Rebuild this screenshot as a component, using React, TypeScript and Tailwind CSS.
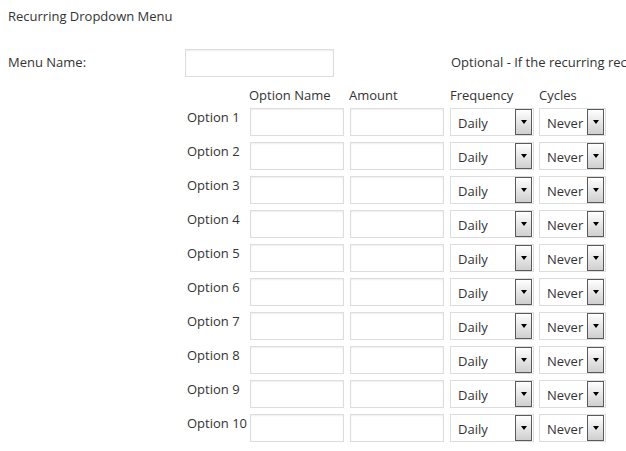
import React from 'react'

function Select({ value, width }: { value: string; width: string }) {
  return (
    <div className={`${width} shrink-0 h-[28px] border border-[#dddddd] bg-white flex items-center justify-between pl-[7px] pr-[1px]`}>
      <span className="text-[13px] text-[#333] pt-[3px]">{value}</span>
      <div className="w-[17px] h-[26px] border border-[#5a5a5a] bg-gradient-to-b from-white to-[#cfcfcf] flex justify-center pt-[10px]">
        <div className="w-0 h-0 border-l-[3px] border-r-[3px] border-t-[4px] border-l-transparent border-r-transparent border-t-black" />
      </div>
    </div>
  )
}

function TextBox({ width }: { width: string }) {
  return <div className={`${width} shrink-0 h-[28px] border border-[#dddddd] bg-white shadow-[inset_0_1px_2px_rgba(0,0,0,0.07)]`} />
}

export default function App() {
  const rows = Array.from({ length: 10 }, (_, i) => i + 1)
  return (
    <div className="w-[626px] h-[451px] overflow-hidden bg-white text-[#333] text-[13px] font-['Open_Sans',sans-serif]">
      <div className="pl-2 pt-[7px] h-[49px]">Recurring Dropdown Menu</div>
      <div className="flex items-center h-[28px]">
        <div className="w-[185px] shrink-0 pl-2">Menu Name:</div>
        <TextBox width="w-[149px]" />
        <div className="ml-[117px] whitespace-nowrap">Optional - If the recurring recurring menu is left blank</div>
      </div>
      <div className="flex pl-[249px] pt-[9px] h-[31px]">
        <div className="w-[100px] shrink-0">Option Name</div>
        <div className="w-[101px] shrink-0">Amount</div>
        <div className="w-[89px] shrink-0">Frequency</div>
        <div>Cycles</div>
      </div>
      <div className="flex flex-col gap-[6px]">
        {rows.map(n => (
          <div key={n} className="flex pl-[187px]">
            <div className="w-[63px] shrink-0">Option {n}</div>
            <div className="flex gap-[6px]">
              <TextBox width="w-[94px]" />
              <TextBox width="w-[94px]" />
              <Select value="Daily" width="w-[84px]" />
            </div>
            <div className="ml-[5px]">
              <Select value="Never" width="w-[67px]" />
            </div>
          </div>
        ))}
      </div>
    </div>
  )
}
